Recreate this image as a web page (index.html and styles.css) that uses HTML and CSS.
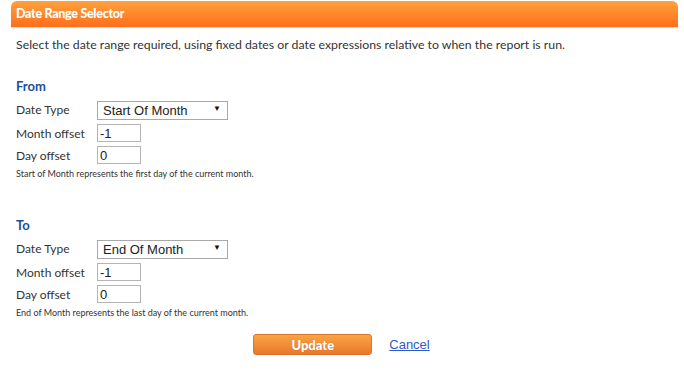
FILE: index.html
```html
<!DOCTYPE html>
<html lang="en">
<head>
  <meta charset="UTF-8" />
  <title>Date Range Selector</title>
  <link rel="stylesheet" href="styles.css">
</head>
<body>
  <div class="panel">
    <div class="panel-header">Date Range Selector</div>
    <div class="panel-body">
      <p class="intro">Select the date range required, using fixed dates or date expressions relative to when the report is run.</p>

      <div class="range-section">
        <h2>From</h2>
        <div class="form-row">
          <label for="fromType">Date Type</label>
          <span class="select-wrap">
            <select id="fromType">
              <option>Start Of Month</option>
              <option>End Of Month</option>
              <option>Fixed Date</option>
            </select>
          </span>
        </div>
        <div class="form-row">
          <label for="fromMonth">Month offset</label>
          <input type="text" id="fromMonth" class="offset" value="-1" />
        </div>
        <div class="form-row">
          <label for="fromDay">Day offset</label>
          <input type="text" id="fromDay" class="offset" value="0" />
        </div>
        <p class="note">Start of Month represents the first day of the current month.</p>
      </div>

      <div class="range-section">
        <h2>To</h2>
        <div class="form-row">
          <label for="toType">Date Type</label>
          <span class="select-wrap">
            <select id="toType">
              <option>End Of Month</option>
              <option>Start Of Month</option>
              <option>Fixed Date</option>
            </select>
          </span>
        </div>
        <div class="form-row">
          <label for="toMonth">Month offset</label>
          <input type="text" id="toMonth" class="offset" value="-1" />
        </div>
        <div class="form-row">
          <label for="toDay">Day offset</label>
          <input type="text" id="toDay" class="offset" value="0" />
        </div>
        <p class="note">End of Month represents the last day of the current month.</p>
      </div>

      <div class="actions">
        <button type="button" class="btn">Update</button>
        <a href="#" class="cancel">Cancel</a>
      </div>
    </div>
  </div>
</body>
</html>
```

FILE: styles.css
```css
* {
  box-sizing: border-box;
}
body {
  font-family: Lato, 'Open Sans', sans-serif;
  margin: 0;
  padding: 0;
  background: #fff;
  color: #333;
}
.panel {
  margin: 1px 6px 0 11px;
}
.panel-header {
  height: 27px;
  padding: 0 5px;
  line-height: 26px;
  font-size: 12.5px;
  font-weight: 900;
  letter-spacing: -0.3px;
  color: #fff;
  background: linear-gradient(to bottom, #ffa13c, #ff6e1c);
  border-radius: 6px 6px 0 0;
  border-bottom: 1px solid #d9d9f2;
}
.panel-body {
  padding: 0 5px;
}
.intro {
  margin: 9px 0 0;
  font-size: 12.3px;
  line-height: 16px;
}
.range-section {
  margin-top: 25px;
}
.range-section + .range-section {
  margin-top: 37px;
}
.range-section h2 {
  margin: 0 0 5px;
  font-size: 13px;
  line-height: 16px;
  color: #1a4f9c;
}
.form-row {
  display: flex;
  align-items: center;
  margin-bottom: 4px;
}
.form-row label {
  width: 81px;
  font-size: 12px;
}
.select-wrap {
  position: relative;
  display: inline-block;
}
.select-wrap select {
  width: 131px;
  height: 19px;
  padding: 0 0 0 5px;
  font-family: 'Liberation Sans', Arial, sans-serif;
  font-size: 13px;
  color: #222;
  border: 1px solid #a9a9a9;
  border-radius: 0;
  background: #fff;
  -webkit-appearance: none;
  appearance: none;
}
.select-wrap::after {
  content: "\25BC";
  position: absolute;
  right: 7px;
  top: 4px;
  font-size: 8px;
  color: #111;
  pointer-events: none;
}
.offset {
  width: 44px;
  height: 18px;
  padding: 0 2px;
  font-family: 'Liberation Sans', Arial, sans-serif;
  font-size: 13px;
  color: #222;
  border: 1px solid #b4b4b4;
}
.note {
  margin: 3px 0 0;
  font-size: 9px;
  line-height: 12px;
}
.actions {
  display: flex;
  justify-content: center;
  align-items: center;
  gap: 17px;
  margin-top: 15px;
  padding-right: 6px;
}
.btn {
  width: 119px;
  height: 21px;
  font-family: Lato, 'Open Sans', sans-serif;
  font-size: 13px;
  font-weight: 900;
  color: #fff;
  text-shadow: 0 0 1px rgba(0,0,0,0.2);
  background: linear-gradient(to bottom, #fba443, #e8782a);
  border: 1px solid #d9752e;
  border-radius: 3px;
  cursor: pointer;
}
.cancel {
  font-family: 'Liberation Sans', Arial, sans-serif;
  font-size: 13px;
  color: #2e59c9;
  text-decoration: underline;
}
```
